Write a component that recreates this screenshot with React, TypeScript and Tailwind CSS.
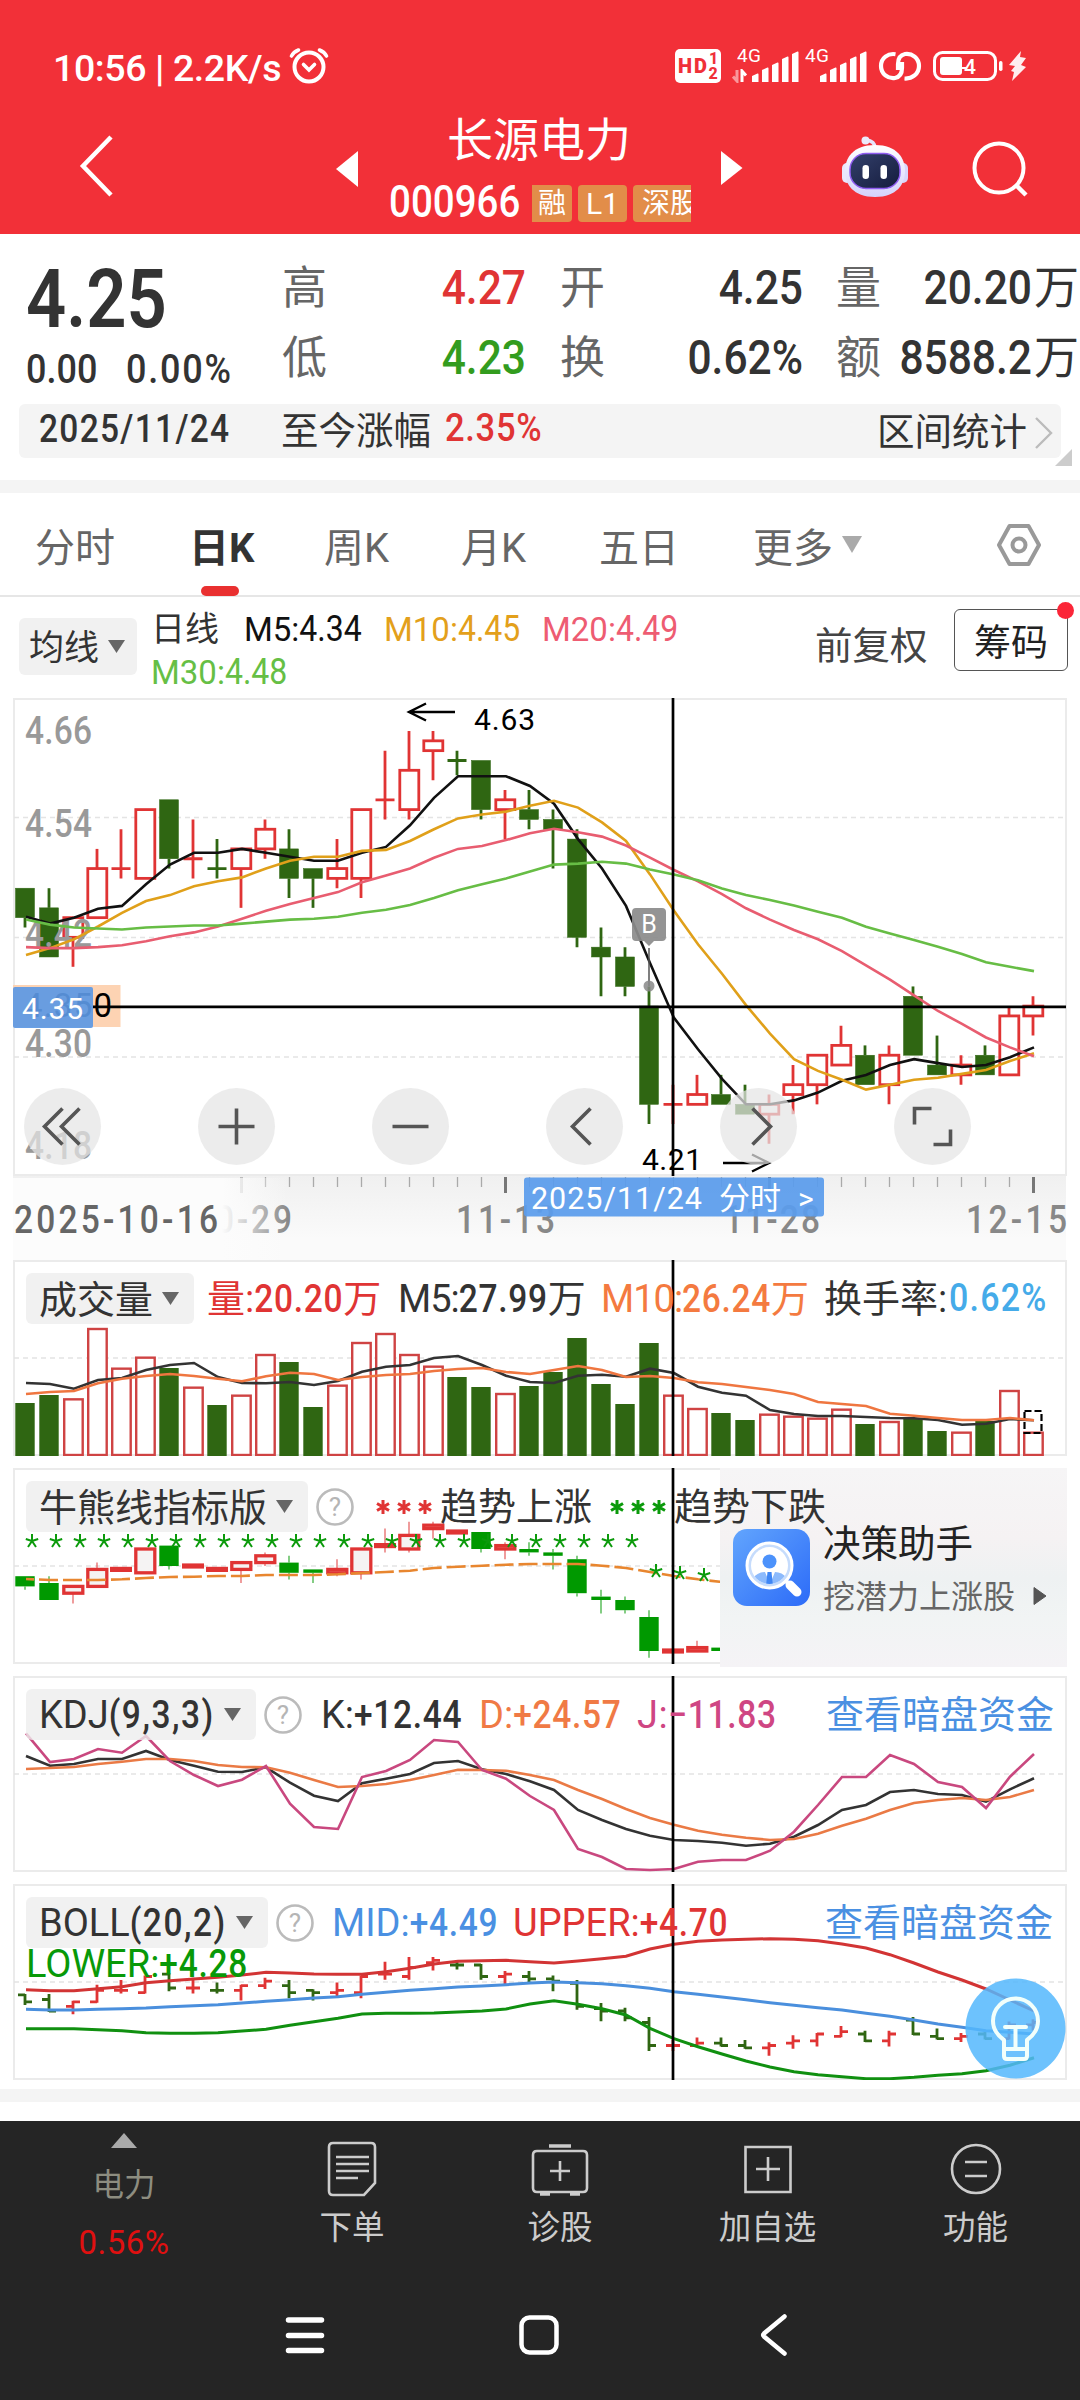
import React from "react";

const RED = "#e03434";
const GREEN = "#2f6612";

/* Horizontal position of the i-th trading day. */
const dayX = (i: number) => 25 + i * 24;
const CURSOR_X = 673;

/* [open, close, high, low] in cents */
const days: [number, number, number, number][] = [
  [447, 444, 447, 443], [445, 440, 447, 440], [442, 444, 444, 439], [444, 449, 451, 444],
  [449, 449, 453, 448], [448, 455, 455, 448], [456, 450, 456, 449], [450, 450, 454, 448],
  [449, 449, 452, 448], [449, 451, 451, 445], [451, 453, 454, 450], [451, 448, 453, 446],
  [449, 448, 449, 445], [448, 449, 452, 447], [448, 455, 455, 446], [456, 456, 461, 454],
  [455, 459, 463, 454], [461, 462, 463, 458], [460, 460, 461, 458.5], [460, 455, 460, 454],
  [455, 456, 457, 452], [455, 454, 457, 453], [454, 453, 455, 449], [452, 442, 453, 441],
  [441, 440, 443, 436], [440, 437, 441, 436], [435, 425, 437, 423], [425, 425, 427, 423],
  [425, 426, 428, 425], [426, 425, 428, 425], [425, 424, 427, 424], [424, 425, 426, 421],
  [426, 427, 429, 424], [427, 430, 430, 425], [429, 431, 433, 429], [430, 427, 431, 427],
  [427, 430, 431, 425], [436, 430, 437, 430], [429, 428, 432, 428], [428, 429, 430, 427],
  [430, 428, 431, 428], [428, 434, 435, 428], [434, 435, 436, 432],
];
const greenDoji = new Set([8, 18]);

const average = (n: number, seed: number[]) =>
  days.map((_, i) => (i < seed.length ? seed[i] : days.slice(i - n + 1, i + 1).reduce((s, d) => s + d[1], 0) / n));

const ma5 = average(5, [444.1, 443.4, 444.0, 444.9]);
const ma10 = average(10, [440.2, 440.9, 441.8, 443.1, 444.5, 445.7, 446.3, 447.2, 447.7]);
const ma20 = average(20, [441, 440.9, 440.9, 441, 441.2, 441.6, 442.1, 442.5, 443.1, 443.9, 444.7, 445.4, 446, 446.6, 447.6, 448.3, 449, 450.1, 451]);
const ma30 = average(30, [443.8, 443.3, 443, 442.9, 442.8, 443, 443.1, 443.2, 443.2, 443.4, 443.6, 443.8, 443.9, 444.1, 444.5, 444.8, 445.3, 446, 446.8, 447.4, 448, 448.7, 449.4, 449.5, 449.7, 449.5, 448.9, 448.4, 447.8]);

const volTops = [489, 465, 478, 267, 386, 353, 384, 443, 495, 467, 345, 366, 501, 437, 309, 282, 345, 380, 411, 441, 462, 438, 396, 294, 432, 492, 309, 467, 507, 519, 540, 524, 530, 536, 509, 552, 546, 536, 573, 578, 543, 453, 578];
const volGreen = new Set([0, 1, 6, 8, 11, 12, 18, 19, 21, 22, 23, 24, 25, 26, 29, 30, 35, 37, 38, 40]);
const volMa5 = [429, 432, 446, 420, 414, 390, 375, 369, 411, 429, 430, 426, 435, 423, 395, 380, 375, 354, 348, 375, 407, 426, 429, 407, 404, 410, 386, 399, 440, 458, 467, 510, 522, 528, 528, 531, 534, 535, 540, 554, 551, 537, 541];
const volMa10 = [462, 456, 453, 430, 416, 408, 402, 408, 416, 424, 409, 398, 402, 420, 411, 405, 402, 393, 387, 384, 396, 402, 390, 378, 390, 411, 408, 414, 427, 432, 441, 450, 462, 486, 492, 498, 521, 527, 534, 540, 540, 534, 541];

const bullLine = [1017, 1020, 1020, 1020, 1018, 1014, 1011, 1010, 1008, 1008, 1005, 1005, 1005, 1003, 999, 996, 992, 984, 980, 977, 974, 972, 972, 972, 977, 984, 996, 1008, 1018, 1026];

const kLine = [288, 317, 312, 297, 297, 273, 300, 317, 335, 336, 322, 368, 407, 423, 370, 356, 342, 309, 303, 328, 342, 364, 390, 450, 480, 507, 527, 540, 543, 548, 557, 551, 530, 495, 450, 435, 396, 390, 402, 405, 425, 388, 355];
const dLine = [327, 324, 321, 312, 305, 297, 297, 303, 315, 321, 322, 338, 360, 381, 378, 372, 360, 345, 329, 330, 332, 345, 360, 390, 417, 447, 474, 494, 512, 524, 533, 540, 537, 521, 497, 476, 450, 429, 420, 414, 420, 411, 390];
const jLine = [220, 306, 297, 267, 278, 228, 303, 345, 378, 359, 318, 431, 501, 507, 351, 333, 300, 240, 246, 330, 356, 408, 450, 567, 591, 627, 630, 627, 605, 600, 600, 572, 515, 435, 351, 351, 285, 312, 366, 381, 444, 350, 282];

const upper = [989, 992, 992, 986, 980, 968, 962, 957, 952, 945, 937, 939, 942, 943, 943, 935, 925, 912, 904, 902, 901, 905, 909, 903, 896, 889, 867, 853, 844, 840, 838, 836, 838, 842, 852, 864, 884, 909, 936, 960, 987, 1020, 1053];
const mid = [1048, 1050, 1050, 1048, 1046, 1044, 1040, 1037, 1034, 1029, 1024, 1019, 1014, 1010, 1003, 997, 991, 986, 981, 978, 974, 969, 966, 968, 971, 977, 985, 995, 1003, 1011, 1019, 1028, 1036, 1043, 1050, 1060, 1069, 1080, 1092, 1102, 1112, 1117, 1122];
const lower = [1106, 1106, 1106, 1109, 1112, 1118, 1120, 1120, 1118, 1113, 1108, 1096, 1085, 1075, 1062, 1060, 1060, 1059, 1056, 1053, 1047, 1032, 1022, 1033, 1046, 1065, 1105, 1136, 1160, 1182, 1203, 1221, 1235, 1244, 1250, 1256, 1256, 1252, 1246, 1241, 1232, 1216, 1193];

const linePoints = (v: number[], f: (y: number) => number) =>
  v.map((y, i) => `${dayX(i) + 1},${f(y).toFixed(1)}`).join(" ");

function Line({ v, f, color, w = 2.6, dash, dashOffset }: { v: number[]; f: (y: number) => number; color: string; w?: number; dash?: string; dashOffset?: number }) {
  return <polyline points={linePoints(v, f)} fill="none" stroke={color} strokeWidth={w} strokeDasharray={dash} strokeDashoffset={dashOffset} />;
}

/* Tall narrow figures used for quotes */
function Num({ children, className = "font-medium" }: { children: React.ReactNode; className?: string }) {
  return <span className={"inline-block shrink-0 origin-[50%_78%] scale-y-[1.15] " + className}>{children}</span>;
}

function DinText({ x, y, w, color, children }: { x: number; y: number; w: number; color: string; children: string }) {
  return (
    <text transform={`translate(${x} ${y}) scale(1 1.15)`} fontSize="33.5" fontWeight="500" fill={color} textLength={w}>
      {children}
    </text>
  );
}

function Frame({ h, grid }: { h: number; grid: number[] }) {
  return (
    <>
      <rect x="14" y="1" width="1052" height={h - 2} fill="none" stroke="#ebebeb" strokeWidth="2" />
      {grid.map((y) => (
        <line key={y} x1="14" x2="1066" y1={y} y2={y} stroke="#e4e4e4" strokeWidth="1.5" strokeDasharray="5 4" />
      ))}
    </>
  );
}

function Cursor({ h }: { h: number }) {
  return <line x1={CURSOR_X} x2={CURSOR_X} y1="0" y2={h} stroke="#000" strokeWidth="2.7" />;
}

/* ---------- Status bar and title ---------- */

function Signal() {
  return (
    <svg width="62" height="40" viewBox="0 0 62 40" fill="#fff">
      <text x="0" y="18" fontSize="19" textLength="24">4G</text>
      {[30, 24, 19, 13, 8].map((y, i) => (
        <path key={y} d={`M${15 + i * 10} 38V${y + 2}l5.5-2.5q1-.5 1 1V38z`} />
      ))}
    </svg>
  );
}

function StatusBar() {
  return (
    <div className="flex h-[106px] items-start pt-[44px] text-white">
      <span className="ml-[53px] mt-[2px] w-[234px] whitespace-nowrap text-[37.5px] font-medium leading-[44px] tracking-[-0.4px]">10:56 | 2.2K/s</span>
      <svg className="ml-[1px]" width="42" height="42" viewBox="0 0 42 42" fill="none" stroke="#fff" strokeWidth="4" strokeLinecap="round">
        <circle cx="21" cy="23" r="14.5" />
        <path d="M15.5 20.5 21 26l5.500-5.500M3.500 12q2-4 7-6M38.500 12q-2-4-7-6" strokeWidth="3.600" />
      </svg>
      <svg className="ml-[345px] mt-[5px]" width="46" height="34" viewBox="0 0 46 34">
        <rect width="46" height="34" rx="5" fill="#fff" />
        <text x="3" y="24" fontSize="20" fontWeight="900" fill="#f03038" textLength="29">HD</text>
        <text x="34" y="15" fontSize="16" fontWeight="800" fill="#f03038">1</text>
        <text x="33.500" y="30" fontSize="16" fontWeight="800" fill="#f03038">2</text>
      </svg>
      <div className="relative ml-[16px]">
        <Signal />
        <svg className="absolute left-[-5px] top-[25px]" width="16" height="14" viewBox="0 0 16 14" fill="none" strokeWidth="3">
          <path d="M5 1v11L1 7.500" stroke="#f9989c" />
          <path d="M10 13V2l4 4.500" stroke="#fff" />
        </svg>
      </div>
      <div className="ml-[6px]"><Signal /></div>
      <svg className="ml-[11px] mt-[6px]" width="44" height="32" viewBox="0 0 44 32" fill="none" stroke="#fff" strokeWidth="4.200">
        <path d="M17.500 4.200C10 3 3 8 3 16s7 13 14 12c5-1 7-5 7-10v-6" />
        <path d="M26.500 28.500C34 29 41 24 41 16S34 3 27 4c-5 1-7 5-7 10v6" />
      </svg>
      <svg className="ml-[11px] mt-[6px]" width="72" height="32" viewBox="0 0 72 32">
        <rect x="1.500" y="2.500" width="61" height="27" rx="8" fill="none" stroke="#fff" strokeWidth="3" />
        <rect x="7" y="7" width="22" height="18" rx="3" fill="#fff" />
        <text x="31" y="23.500" fontSize="21" fontWeight="500" fill="#fff">4</text>
        <rect x="28" y="17" width="6" height="2" fill="#fff" />
        <rect x="66" y="11" width="3.500" height="10" rx="1.700" fill="#fff" />
      </svg>
      <svg className="ml-[3px] mt-[6px]" width="20" height="32" viewBox="0 0 20 32">
        <path d="M13 1 1 15l6 1-4 5 3 1-2 9L18 17l-5-2 5-7-6-1z" fill="#fff" opacity=".92" />
      </svg>
    </div>
  );
}

function Robot() {
  return (
    <svg width="70" height="64" viewBox="0 0 70 64">
      <defs>
        <linearGradient id="robotShell" x1="0" y1="0" x2="0" y2="1">
          <stop offset="0" stopColor="#fff" />
          <stop offset="1" stopColor="#d5d2fb" />
        </linearGradient>
        <linearGradient id="robotFace" x1="0" y1="0" x2="1" y2="1">
          <stop offset="0" stopColor="#33406b" />
          <stop offset="1" stopColor="#151c3d" />
        </linearGradient>
      </defs>
      <path d="M35 12Q35 5 26 4" fill="none" stroke="#e6e4fb" strokeWidth="3.500" />
      <circle cx="25.500" cy="4.500" r="4" fill="#eceafb" />
      <rect x="2" y="27" width="10" height="20" rx="5" fill="#e9e7fd" />
      <rect x="58" y="27" width="10" height="20" rx="5" fill="#d9d6fb" />
      <path d="M35 9c22 0 30 13 30 26S57 61 35 61 5 48 5 35 13 9 35 9z" fill="url(#robotShell)" />
      <rect x="10" y="17.500" width="50" height="35" rx="16" fill="url(#robotFace)" stroke="#8f5cf0" strokeWidth="1.500" />
      <rect x="22.500" y="29" width="6.500" height="14" rx="3.200" fill="#fff" />
      <rect x="40.500" y="29" width="6.500" height="14" rx="3.200" fill="#fff" />
    </svg>
  );
}

function TitleBar() {
  return (
    <div className="flex h-[128px] items-start">
      <svg className="ml-[76px] mt-[27px]" width="42" height="66" viewBox="0 0 42 66" fill="none" stroke="#fff" strokeWidth="4.500">
        <path d="M35 4 7 33l28 29" />
      </svg>
      <svg className="ml-[216px] mt-[45px]" width="26" height="36" viewBox="0 0 26 36"><path d="M24 0v36L2 18z" fill="#fff" /></svg>
      <div className="ml-[27px] flex w-[304px] flex-col items-center text-white">
        <div className="mt-[6px] w-[304px] text-center text-[46px] leading-[56px]">长源电力</div>
        <div className="mt-[16px] flex h-[38px] w-[304px] items-center overflow-hidden whitespace-nowrap">
          <Num className="ml-[2px] w-[140px] pt-[1px] text-[38.500px] font-medium leading-[36px]">000966</Num>
          <span className="ml-[3px] h-[37px] w-[40px] shrink-0 rounded-r bg-[#e28d49] text-center text-[28px] leading-[37px]">融</span>
          <span className="ml-[6px] h-[37px] w-[49px] shrink-0 rounded bg-[#e28d49] text-center text-[30px] leading-[37px]">L1</span>
          <span className="ml-[6px] h-[37px] w-[78px] shrink-0 rounded-l bg-[#e28d49] pl-[9px] text-[28px] leading-[37px]">深股通</span>
        </div>
      </div>
      <svg className="ml-[30px] mt-[45px]" width="22" height="34" viewBox="0 0 22 34"><path d="M0 0v34l21.500-17z" fill="#fff" /></svg>
      <div className="ml-[97px] mt-[30px]"><Robot /></div>
      <svg className="ml-[60px] mt-[33px]" width="62" height="62" viewBox="0 0 62 62" fill="none" stroke="#fff" strokeWidth="4">
        <circle cx="29" cy="29" r="24.500" />
        <path d="m47 47 9 9" strokeWidth="4.500" />
      </svg>
    </div>
  );
}

/* ---------- Quote ---------- */

function QuoteRow({ cells }: { cells: [string, string, string, string, string, string] }) {
  const [a, av, b, bv, c, cv] = cells;
  const colored = av === "4.27" ? "text-[#e03434]" : "text-[#339c1e]";
  return (
    <div className="flex h-[70px] items-center whitespace-nowrap text-[45px] leading-[70px] text-[#333]">
      <span className="w-[46px] pt-[2px] text-[#666]">{a}</span>
      <Num className={"mt-[5px] w-[198px] text-right text-[42.500px] font-medium " + colored}>{av}</Num>
      <span className="ml-[34px] w-[46px] pt-[2px] text-[#666]">{b}</span>
      <Num className="mt-[5px] w-[197px] text-right text-[42.500px] font-medium">{bv}</Num>
      <span className="ml-[33px] w-[46px] pt-[2px] text-[#666]">{c}</span>
      <span className="flex w-[197px] items-center justify-end">
        <Num className="mt-[5px] text-[42.500px] font-medium">{cv}</Num>
        <span className="ml-[2px] pt-[2px]">万</span>
      </span>
    </div>
  );
}

function Quote() {
  return (
    <div className="h-[246px] bg-white">
      <div className="flex h-[169px]">
        <div className="w-[256px] pl-[26px] text-[#333]">
          <div className="mt-[31px] h-[76px]"><Num className="text-[70.500px] font-semibold leading-[76px]">4.25</Num></div>
          <div className="mt-[5px] flex text-[36px] leading-[50px]">
            <Num className="w-[100px] font-medium">0.00</Num>
            <Num className="font-medium tracking-[1.800px]">0.00%</Num>
          </div>
        </div>
        <div className="w-[824px] pl-[26px] pt-[19px]">
          <QuoteRow cells={["高", "4.27", "开", "4.25", "量", "20.20"]} />
          <QuoteRow cells={["低", "4.23", "换", "0.62%", "额", "8588.2"]} />
        </div>
      </div>
      <div className="relative ml-[19px] mt-[1px] flex h-[54px] w-[1042px] items-center rounded-[6px] bg-[#f4f4f4] text-[37.500px] text-[#333]">
        <Num className="ml-[20px] w-[242px] text-[33.500px] font-medium tracking-[1.300px]">2025/11/24</Num>
        <span className="w-[164px] shrink-0 whitespace-nowrap">至今涨幅</span>
        <Num className="w-[432px] text-[34.500px] font-medium tracking-[0.700px] text-[#e03434]">2.35%</Num>
        <span className="mt-[2px] w-[157px] shrink-0 whitespace-nowrap">区间统计</span>
        <svg className="mt-[4px] shrink-0" width="20" height="34" viewBox="0 0 20 34" fill="none" stroke="#bbb" strokeWidth="2.400"><path d="m2 2 15 15L2 32" /></svg>
        <svg className="absolute left-[1036px] top-[45px]" width="17" height="17" viewBox="0 0 17 17"><path d="M17 0v17H0z" fill="#ccc" /></svg>
      </div>
    </div>
  );
}

/* ---------- Period tabs and moving averages ---------- */

function Tabs() {
  return (
    <div className="flex h-[104px] items-start border-b-2 border-[#e6e6e6] bg-white text-[40px] leading-[111px] text-[#666]">
      <span className="ml-[35px] w-[154px]">分时</span>
      <span className="relative w-[135px] font-bold text-[#333]">
        日K
        <i className="absolute left-[12px] top-[93px] block h-[10px] w-[38px] rounded-[5px] bg-[#e93030]" />
      </span>
      <span className="w-[137px]">周K</span>
      <span className="w-[138px]">月K</span>
      <span className="w-[154px]">五日</span>
      <span className="w-[89px]">更多</span>
      <svg className="mt-[43px]" width="20" height="17" viewBox="0 0 20 17"><path d="M0 0h20L10 17z" fill="#aaa" /></svg>
      <svg className="ml-[134px] mt-[30px]" width="46" height="44" viewBox="0 0 46 44" fill="none" stroke="#999" strokeWidth="4">
        <path d="M13.500 3h19l10.500 19-10.500 19h-19L3 22z" strokeLinejoin="round" />
        <circle cx="23" cy="22" r="6.500" />
      </svg>
    </div>
  );
}

function AvgTag({ label, value, className }: { label: string; value: string; className: string }) {
  return (
    <span className={"flex items-baseline whitespace-nowrap text-[33px] " + className}>
      {label}
      <Num className="text-[32px]">{value}</Num>
    </span>
  );
}

function AverageRow() {
  return (
    <div className="flex h-[101px] items-start bg-white">
      <div className="ml-[19px] mt-[21px] flex h-[57px] w-[118px] items-center rounded-[6px] bg-[#f1f1f1] pl-[10px] text-[35px] text-[#333]">
        <span className="mt-[5px]">均线</span>
        <svg className="ml-[9px]" width="17" height="13" viewBox="0 0 17 13"><path d="M0 0h17l-8.500 13z" fill="#666" /></svg>
      </div>
      <div className="ml-[14px] mt-[9px] w-[664px]">
        <div className="flex h-[44px] items-baseline text-[34px] leading-[46px] text-[#333]">
          <span className="w-[93px]">日线</span>
          <AvgTag label="M5:" value="4.34" className="w-[140px] text-[#111]" />
          <AvgTag label="M10:" value="4.45" className="w-[158px] text-[#e3a01b]" />
          <AvgTag label="M20:" value="4.49" className="text-[#ee5c72]" />
        </div>
        <div className="text-[34px] leading-[46px]"><AvgTag label="M30:" value="4.48" className="text-[#66bf45]" /></div>
      </div>
      <span className="mt-[23px] w-[139px] whitespace-nowrap text-[37.500px] leading-[52px] text-[#444]">前复权</span>
      <div className="relative mt-[12px] flex h-[62px] w-[114px] items-center justify-center rounded-[6px] border-[1.500px] border-[#555] pt-[7px] text-[37px] text-[#222]">
        筹码
        <i className="absolute right-[-7px] top-[-8px] block h-[17px] w-[17px] rounded-full bg-[#fb2638]" />
      </div>
    </div>
  );
}

/* ---------- Price chart ---------- */

const priceY = (p: number) => 33 + (463 - p) * 9.825;

function Candle({ i }: { i: number }) {
  const [o, c, h, l] = days[i];
  const x = dayX(i);
  if (o === c) {
    return <path d={`M${x - 9.500} ${priceY(c)}h19M${x} ${priceY(h)}V${priceY(l)}`} stroke={greenDoji.has(i) ? GREEN : RED} strokeWidth="2.800" />;
  }
  const top = priceY(Math.max(o, c));
  const bottom = priceY(Math.min(o, c));
  const up = c > o;
  return (
    <g stroke={up ? RED : GREEN} strokeWidth="2.800">
      <path d={`M${x} ${priceY(h)}V${top}M${x} ${bottom}V${priceY(l)}`} />
      {up ? <rect x={x - 9.200} y={top} width="19" height={bottom - top} fill="#fff" /> : <rect x={x - 9.500} y={top} width="19" height={bottom - top} fill={GREEN} strokeWidth=".5" />}
    </g>
  );
}

const controls: [number, string][] = [
  [62.500, "M0-18-18 0 0 18M17-18-1 0 17 18"],
  [236.500, "M-18 0h36M0-18v36"],
  [410.500, "M-18 0h36"],
  [584.500, "M6-18-12 0 6 18"],
  [758.500, "M-6-18 12 0-6 18"],
  [932.500, "M-18-2v-16H-1M18 3v15H1"],
];

function PriceChart() {
  return (
    <div className="relative h-[478px] bg-white">
      <svg className="absolute inset-0" width="1080" height="478" viewBox="0 0 1080 478">
        <Frame h={478} grid={[119.500, 239.500, 359]} />
        {days.map((_, i) => <Candle key={i} i={i} />)}
        <DinText x={25} y={46} w={67} color="#999">4.66</DinText>
        <DinText x={25} y={139} w={67} color="#999">4.54</DinText>
        <DinText x={25} y={249} w={67} color="#999">4.42</DinText>
        <DinText x={25} y={359} w={67} color="#999">4.30</DinText>
        <DinText x={25} y={461} w={67} color="#999">4.18</DinText>
        <Line v={ma5} f={priceY} color="#111" />
        <Line v={ma10} f={priceY} color="#e0a01a" />
        <Line v={ma20} f={priceY} color="#e85d70" />
        <Line v={ma30} f={priceY} color="#67bd45" />
        <g fill="none" stroke="#000" strokeWidth="2.400">
          <path d="M455 14h-46M426 5.500 409 14l17 8.500" />
          <path d="M723 465h46M752 456.500l17 8.500-17 8.500" />
        </g>
        <text x="474" y="32" fontSize="30" fill="#000" textLength="61">4.63</text>
        <text x="642" y="472" fontSize="30" fill="#000" textLength="60">4.21</text>
        <g>
          <path d="M649 250v38" stroke="#555" strokeWidth="1.500" />
          <circle cx="649" cy="288" r="5.500" fill="#888" opacity=".85" />
          <path d="M636 210h26q4 0 4 4v25q0 4-4 4h-8l-5 5-5-5h-8q-4 0-4-4v-25q0-4 4-4z" fill="#8c8c8c" opacity=".93" />
          <text x="649" y="235" fontSize="25" fill="#fff" textAnchor="middle">B</text>
        </g>
        <rect x="13" y="287" width="107.500" height="42" fill="#fdd3b3" />
        <text x="24" y="319" fontSize="33" fill="#000" textLength="88">4.350</text>
        <line x1="93" x2="1066" y1="308.800" y2="308.800" stroke="#000" strokeWidth="2.800" />
        <Cursor h={478} />
        <rect x="13" y="289" width="80" height="41" rx="2" fill="#5c98e4" opacity=".92" />
        <text x="22" y="320.500" fontSize="30" fill="#fff" textLength="61">4.35</text>
        {controls.map(([x, d]) => (
          <g key={x} transform={`translate(${x} 428.500)`}>
            <circle r="38.500" fill="#e4e4e4" opacity=".72" />
            <path d={d} fill="none" stroke="#555" strokeWidth="3.600" />
          </g>
        ))}
      </svg>
    </div>
  );
}

function DateAxis() {
  return (
    <div className="relative h-[84px] bg-white">
      <svg className="absolute inset-0" width="1080" height="84" viewBox="0 0 1080 84">
        <defs>
          <linearGradient id="axisFade" x1="0" y1="0" x2="0" y2="1">
            <stop offset="0" stopColor="#f0f0f0" />
            <stop offset=".75" stopColor="#fafafa" />
          </linearGradient>
          <linearGradient id="axisVeil" x1="0" x2="1" y1="0" y2="0">
            <stop offset=".76" stopColor="#fcfcfc" />
            <stop offset="1" stopColor="#fcfcfc" stopOpacity="0" />
          </linearGradient>
        </defs>
        <rect x="13" width="1053" height="84" fill="url(#axisFade)" />
        {days.map((_, i) => {
          if (i < 9) return null;
          const major = (i - 9) % 11 === 0;
          return <line key={i} x1={dayX(i) + 0.500} x2={dayX(i) + 0.500} y1="1" y2={major ? 17 : 11} stroke={i === 9 ? "#bbb" : major ? "#777" : "#aaa"} strokeWidth={major ? 3 : 1.300} />;
        })}
        <DinText x={193} y={57} w={99} color="#888">10-29</DinText>
        <rect x="13" y="2" width="275" height="82" fill="url(#axisVeil)" />
        <DinText x={14} y={57} w={204} color="#666">2025-10-16</DinText>
        <DinText x={456} y={57} w={99} color="#888">11-13</DinText>
        <DinText x={724} y={57} w={96} color="#888">11-28</DinText>
        <DinText x={966} y={57} w={101} color="#888">12-15</DinText>
        <rect x="524" y="1.500" width="300" height="39" rx="3" fill="#5a9cec" opacity=".93" />
        <text x="531" y="33" fontSize="30.500" fill="#fff" textLength="171">2025/11/24</text>
        <text x="719" y="33" fontSize="31" fill="#fff">分时</text>
        <text x="798" y="33" fontSize="30" fill="#fff">&gt;</text>
      </svg>
    </div>
  );
}

/* ---------- Indicator panels ---------- */

function Pill({ children, className }: { children: React.ReactNode; className: string }) {
  return (
    <div className={"ml-[26px] flex h-[51px] shrink-0 items-center justify-between whitespace-nowrap rounded-[6px] bg-[#eeeeee]/80 pl-[13px] pr-[15px] text-[38px] leading-[51px] text-[#333] " + className}>
      <span className="mt-[3px] flex items-baseline">{children}</span>
      <svg width="17" height="13" viewBox="0 0 17 13"><path d="M0 0h17l-8.500 13z" fill="#666" /></svg>
    </div>
  );
}

function Help() {
  return (
    <svg className="ml-[8px] shrink-0" width="38" height="38" viewBox="0 0 38 38" fill="none">
      <circle cx="19" cy="19" r="17.500" stroke="#bbb" strokeWidth="2.600" />
      <text x="19" y="28" fontSize="26" textAnchor="middle" fill="#b5b5b5">?</text>
    </svg>
  );
}

function Value({ label, value, unit = "", className }: { label: string; value: string; unit?: string; className: string }) {
  return (
    <span className={"mt-[2px] flex shrink-0 items-baseline whitespace-nowrap text-[38px] leading-[51px] " + className}>
      {label}
      {value && <Num className="text-[33.500px] font-medium tracking-[0.700px]">{value}</Num>}
      {unit && <span>{unit}</span>}
    </span>
  );
}

function Panel({ chart, children }: { chart: React.ReactNode; children: React.ReactNode }) {
  return (
    <section className="relative h-[196px] bg-white">
      <svg className="absolute inset-0" width="1080" height="196" viewBox="0 0 1080 196">{chart}</svg>
      <div className="relative flex h-[77px] items-center">{children}</div>
    </section>
  );
}

function VolumePanel() {
  const f = (y: number) => y / 3 - 20;
  return (
    <Panel
      chart={
        <>
          <Frame h={196} grid={[98]} />
          {volTops.map((y, i) =>
            volGreen.has(i) ? (
              <rect key={i} x={dayX(i) - 9.700} y={f(y)} width="19.400" height={196 - f(y)} fill={GREEN} />
            ) : (
              <rect key={i} x={dayX(i) - 8.800} y={f(y)} width="18.500" height={195 - f(y)} fill="#fff" stroke="#cf4343" strokeWidth="2.400" />
            ),
          )}
          <rect x="1024.500" y="151" width="17" height="22" fill="none" stroke="#000" strokeWidth="2.200" strokeDasharray="7 3" />
          <Line v={volMa5} f={f} color="#333" />
          <Line v={volMa10} f={f} color="#ef7640" />
          <Cursor h={196} />
        </>
      }
    >
      <Pill className="w-[168px]">成交量</Pill>
      <Value label="量:" value="20.20" unit="万" className="ml-[13px] w-[191px] text-[#e03434]" />
      <Value label="M5:" value="27.99" unit="万" className="w-[203px] tracking-[-1px] text-[#333]" />
      <Value label="M10:" value="26.24" unit="万" className="w-[223px] tracking-[-1px] text-[#f47a40]" />
      <Value label="换手率:" value="" className="w-[125px] text-[#333]" />
      <Num className="mt-[2px] text-[34px] font-medium leading-[51px] tracking-[1.200px] text-[#45abe9]">0.62%</Num>
    </Panel>
  );
}

const bullY = (p: number) => 149 + (435 - p) * 3.400;
const noWick = new Set([4, 7, 8, 18, 27]);

function BullCandle({ i }: { i: number }) {
  const [o, c, h, l] = days[i];
  const x = dayX(i);
  const top = bullY(Math.max(o, c));
  const bottom = bullY(Math.min(o, c));
  const up = c >= o;
  const color = up ? RED : "#009900";
  return (
    <g stroke={color}>
      {!noWick.has(i) && <path d={`M${x} ${bullY(h)}V${top}M${x} ${bottom}V${bullY(l)}`} strokeWidth="1.600" opacity=".6" />}
      {o === c ? (
        <path d={`M${x - 11} ${top}h22`} strokeWidth="5.200" />
      ) : up ? (
        <rect x={x - 9.200} y={top} width="19" height={bottom - top} fill="#f5f3f3" strokeWidth="3.300" />
      ) : (
        <rect x={x - 9.700} y={top} width="19.400" height={bottom - top} fill={color} stroke="none" />
      )}
    </g>
  );
}

function Star({ x, y }: { x: number; y: number }) {
  return <path transform={`translate(${x} ${y})`} d="M0 0v-7M0 0l6.200-2M0 0l-6.200-2M0 0l4 6M0 0l-4 6" stroke="#0b9a0b" strokeWidth="2" />;
}

function Stars({ color }: { color: string }) {
  return (
    <svg className="shrink-0" width="56" height="14" viewBox="0 0 56 14" stroke={color} strokeWidth="3">
      {[7, 28, 49].map((x) => (
        <path key={x} d={`M${x} 0v14M${x - 6} 3.500l12 7M${x - 6} 10.500l12-7`} />
      ))}
    </svg>
  );
}

function AssistantCard() {
  return (
    <div className="absolute left-[720px] top-[0px] flex h-[199px] w-[347px] items-start bg-[linear-gradient(180deg,#f6f5f6_0%,#f5f2f3_35%,#eef1f2_55%,#f1f4f4_75%,#f5f3f6_100%)]">
      <svg className="ml-[13px] mt-[61px]" width="77" height="77" viewBox="0 0 77 77">
        <defs>
          <linearGradient id="assistant" x1="0" y1="0" x2="1" y2="1">
            <stop offset="0" stopColor="#62a5fd" />
            <stop offset="1" stopColor="#2c6bf8" />
          </linearGradient>
          <clipPath id="lens"><circle cx="36.500" cy="36.500" r="18.500" /></clipPath>
        </defs>
        <rect width="77" height="77" rx="14" fill="url(#assistant)" />
        <circle cx="36.500" cy="36.500" r="22.500" fill="#c6dcfc" stroke="#fff" strokeWidth="3" />
        <circle cx="36.500" cy="36.500" r="18.500" fill="#fff" />
        <circle cx="36.500" cy="32.500" r="7" fill="#4c92fb" />
        <g clipPath="url(#lens)">
          <path d="M20 58V49q5-6 12-6l5 12 5-12q7 0 12 6v9z" fill="#8cbafc" />
          <path d="M34.500 43h4l1.500 14h-7z" fill="#3f86f5" />
        </g>
        <path d="m57 56 7 7" stroke="#fff" strokeWidth="9" strokeLinecap="round" />
        <path d="m52 51 4 4" stroke="#fff" strokeWidth="4" />
      </svg>
      <div className="ml-[13px] mt-[49px] w-[210px] whitespace-nowrap">
        <div className="text-[37.500px] leading-[54px] text-[#222]">决策助手</div>
        <div className="text-[32px] leading-[52px] text-[#666]">挖潜力上涨股</div>
      </div>
      <svg className="mt-[118px]" width="14" height="20" viewBox="0 0 14 20"><path d="M1 1.500 13 10 1 18.500z" fill="#555" stroke="#555" strokeLinejoin="round" /></svg>
    </div>
  );
}

function BullPanel() {
  return (
    <section className="relative h-[196px] bg-white">
      <svg className="absolute inset-0" width="1080" height="196" viewBox="0 0 1080 196">
        <Frame h={196} grid={[98]} />
        {days.slice(0, 30).map((_, i) => <BullCandle key={i} i={i} />)}
        <Line v={bullLine} f={(y) => y / 3 - 228} color="#e8862f" dash="19 5" dashOffset={11} />
        {Array.from({ length: 26 }, (_, i) => <Star key={i} x={dayX(i) + 7} y={73} />)}
        <Star x={656} y={103} />
        <Star x={680} y={105} />
        <Star x={704} y={107} />
        <Cursor h={196} />
      </svg>
      <AssistantCard />
      <div className="relative flex h-[77px] items-center">
        <Pill className="w-[282px]">牛熊线指标版</Pill>
        <Help />
        <span className="ml-[22px]"><Stars color={RED} /></span>
        <Value label="趋势上涨" value="" className="ml-[8px] w-[170px] text-[#333]" />
        <Stars color="#0b9a0b" />
        <Value label="趋势下跌" value="" className="ml-[8px] text-[#333]" />
      </div>
    </section>
  );
}

function KdjPanel() {
  const f = (y: number) => y / 3 - 16;
  return (
    <Panel
      chart={
        <>
          <Frame h={196} grid={[98]} />
          <Line v={kLine} f={f} color="#333" />
          <Line v={dLine} f={f} color="#ea7a45" />
          <Line v={jLine} f={f} color="#c9487f" />
          <Cursor h={196} />
        </>
      }
    >
      <Pill className="w-[230px]">KDJ<Num className="text-[33.500px] font-medium tracking-[1.500px]">(9,3,3)</Num></Pill>
      <Help />
      <Value label="K:" value="+12.44" className="ml-[19px] w-[158px] text-[#333]" />
      <Value label="D:" value="+24.57" className="w-[158px] text-[#f07a45]" />
      <Value label="J:" value="−11.83" className="w-[189px] tracking-[0.500px] text-[#cf4683]" />
      <Value label="查看暗盘资金" value="" className="text-[#4a90e2]" />
    </Panel>
  );
}

function BollPanel() {
  const f = (y: number) => y / 3 - 224;
  const py = (p: number) => 138.500 + (435 - p) * 2.300;
  return (
    <Panel
      chart={
        <>
          <Frame h={196} grid={[98]} />
          {days.map(([o, c, h, l], i) => (
            <path
              key={i}
              d={`M${dayX(i)} ${py(h) - 1}V${py(l) + 1}M${dayX(i) - 7} ${py(o)}h7M${dayX(i)} ${py(c)}h7`}
              stroke={c < o || greenDoji.has(i) ? GREEN : RED}
              strokeWidth="2.800"
            />
          ))}
          <Line v={upper} f={f} color="#d23434" w={3} />
          <Line v={mid} f={f} color="#4a8fdd" w={3} />
          <Line v={lower} f={f} color="#109010" w={3} />
          <Cursor h={196} />
        </>
      }
    >
      <Pill className="w-[242px]">BOLL<Num className="text-[33.500px] font-medium tracking-[1.500px]">(20,2)</Num></Pill>
      <Help />
      <Value label="MID:" value="+4.49" className="ml-[18px] w-[181px] text-[#4a90e2]" />
      <Value label="UPPER:" value="+4.70" className="w-[312px] text-[#e03434]" />
      <Value label="查看暗盘资金" value="" className="text-[#4a90e2]" />
      <span className="absolute left-[26px] top-[53px]">
        <Value label="LOWER:" value="+4.28" className="text-[#089908]" />
      </span>
      <svg className="absolute left-[965px] top-[94px]" width="101" height="101" viewBox="0 0 101 101">
        <circle cx="50.500" cy="50.500" r="50" fill="#53b7fd" opacity=".85" />
        <g fill="none" stroke="#f2fffb" strokeWidth="4" strokeLinejoin="round" strokeLinecap="round">
          <path d="M39 62C32 57 28 50 28 43a22.500 22.500 0 0 1 45 0c0 7-4 14-11 19v16q0 3-3 3H42q-3 0-3-3z" />
          <path d="M40 49h21M50.500 49v22M40 71h21" />
        </g>
      </svg>
    </Panel>
  );
}

/* ---------- Bottom bars ---------- */

function Action({ label, icon, className }: { label: string; icon: React.ReactNode; className: string }) {
  return (
    <div className={"flex flex-col items-center " + className}>
      <svg className="mt-[19px]" width="60" height="58" viewBox="0 0 60 58" fill="none" stroke="#ccc" strokeWidth="2.600">{icon}</svg>
      <span className="mt-[6px] text-[32.500px] leading-[48px] text-[#ccc]">{label}</span>
    </div>
  );
}

function BottomBar() {
  return (
    <div className="flex h-[139px] bg-[#252525]">
      <div className="flex w-[248px] flex-col items-center">
        <svg className="mt-[12px] shrink-0" width="26" height="15" viewBox="0 0 26 15"><path d="M13 0l13 15H0z" fill="#aaa" /></svg>
        <span className="mt-[15px] shrink-0 text-[31.500px] leading-[46px] text-[#8d8d80]">电力</span>
        <span className="mt-[12px] shrink-0 text-[33px] leading-[44px] tracking-[0.500px] text-[#e01010]">0.56%</span>
      </div>
      <Action
        className="w-[208px]"
        label="下单"
        icon={<path d="M11 3h38q4 0 4 4v36L42 55H11q-4 0-4-4V7q0-4 4-4zM14 17h33M14 24h33M14 31h33M14 38h22" />}
      />
      <Action
        className="w-[208px]"
        label="诊股"
        icon={<><path d="M7 11h46q4 0 4 4v33q0 4-4 4H7q-4 0-4-4V15q0-4 4-4zM20 31h20M30 21v20" /><path d="M19 6h22M10 54h10M40 54h10" strokeWidth="3.500" /></>}
      />
      <Action className="w-[207px]" label="加自选" icon={<path d="M7.500 7h45v45h-45zM18 29h24M30 17v24" />} />
      <Action className="w-[209px]" label="功能" icon={<><circle cx="30" cy="29" r="24" /><path d="M19 22h22M19 36h22" /></>} />
    </div>
  );
}

function SystemNav() {
  return (
    <div className="flex h-[140px] items-start bg-[#252525]">
      <svg className="ml-[285px] mt-[53px]" width="40" height="44" viewBox="0 0 40 44" stroke="#fff" strokeWidth="5.500" strokeLinecap="round">
        <path d="M3.500 7h33M3.500 22.500h33M3.500 37.500h33" />
      </svg>
      <svg className="ml-[193px] mt-[53px]" width="42" height="44" viewBox="0 0 42 44" fill="none" stroke="#fff" strokeWidth="4.500">
        <rect x="3.500" y="4.500" width="35" height="35" rx="8" />
      </svg>
      <svg className="ml-[199px] mt-[53px]" width="30" height="44" viewBox="0 0 30 44" fill="none" stroke="#fff" strokeWidth="4.500" strokeLinecap="round">
        <path d="M25.500 3.500 5 20.500q-1.500 1.500 0 3l20.500 17" />
      </svg>
    </div>
  );
}

export default function App() {
  return (
    <main className="h-[2400px] w-[1080px] overflow-hidden bg-white font-[Roboto,'Noto_Sans_CJK_SC',sans-serif]">
      <header className="h-[234px] bg-[#f23038]">
        <StatusBar />
        <TitleBar />
      </header>
      <Quote />
      <div className="h-[13px] bg-[#f4f4f4]" />
      <Tabs />
      <AverageRow />
      <PriceChart />
      <DateAxis />
      <div className="flex flex-col gap-[12px]">
        <VolumePanel />
        <BullPanel />
        <KdjPanel />
        <BollPanel />
      </div>
      <div className="mt-[9px] h-[13px] bg-[#f4f4f4]" />
      <div className="h-[19px] bg-white" />
      <BottomBar />
      <SystemNav />
    </main>
  );
}
